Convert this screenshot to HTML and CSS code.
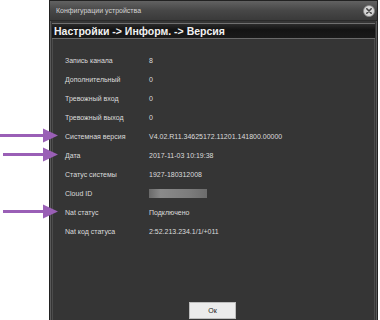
FILE: index.html
```html
<!DOCTYPE html>
<html lang="ru">
<head>
    <meta charset="UTF-8">
    <title>Конфигурации устройства</title>
    <link rel="stylesheet" href="styles.css">
</head>
<body>
    <div class="page">
        <div class="dialog">
            <div class="titlebar">
                <span class="title">Конфигурации устройства</span>
                <span class="close">
                    <svg width="12" height="12" viewBox="0 0 12 12">
                        <circle cx="6" cy="6" r="5.5" fill="#d6d6d6" stroke="#888" stroke-width="0.8"/>
                        <path d="M3.8 3.8 L8.2 8.2 M8.2 3.8 L3.8 8.2" stroke="#444" stroke-width="1.6" stroke-linecap="round"/>
                    </svg>
                </span>
            </div>
            <div class="crumbs">Настройки -&gt; Информ. -&gt; Версия</div>
            <div class="panel">
                <div class="info">
                    <span>Запись канала</span><span>8</span>
                    <span>Дополнительный</span><span>0</span>
                    <span>Тревожный вход</span><span>0</span>
                    <span>Тревожный выход</span><span>0</span>
                    <span>Системная версия</span><span>V4.02.R11.34625172.11201.141800.00000</span>
                    <span>Дата</span><span>2017-11-03 10:19:38</span>
                    <span>Статус системы</span><span>1927-180312008</span>
                    <span>Cloud ID</span><span><i class="blur"></i></span>
                    <span>Nat статус</span><span>Подключено</span>
                    <span>Nat код статуса</span><span>2:52.213.234.1/1/+011</span>
                </div>
                <div class="actions">
                    <button class="button">Ок</button>
                </div>
            </div>
        </div>
        <!-- arrows drawn over the dialog edge -->
        <svg class="arrows" width="70" height="320" viewBox="0 0 70 320">
            <g fill="#9a5fb6" stroke="#9a5fb6">
                <line x1="0" y1="135.5" x2="46" y2="135.5" stroke-width="3"/>
                <polygon points="43,128.5 58,135.5 43,142.5" stroke="none"/>
                <line x1="3" y1="154.5" x2="46" y2="154.5" stroke-width="3"/>
                <polygon points="43,147.5 58,154.5 43,161.5" stroke="none"/>
                <line x1="3" y1="211.5" x2="46" y2="211.5" stroke-width="3"/>
                <polygon points="43,204.5 58,211.5 43,218.5" stroke="none"/>
            </g>
        </svg>
    </div>
</body>
</html>
```

FILE: styles.css
```css
body {
    margin: 0;
    background: #ffffff;
    font-family: "Liberation Sans", Arial, sans-serif;
}

.page {
    position: relative;
    width: 380px;
    height: 320px;
    overflow: hidden;
}

.dialog {
    margin-left: 49px;
    width: 327px;
    height: 330px;
    background: #353535;
    border: 1px solid #222;
    box-shadow: inset 0 0 0 1px #5a5a5a;
    display: flex;
    flex-direction: column;
}

.titlebar {
    height: 19px;
    display: flex;
    align-items: center;
    justify-content: space-between;
    padding: 0 2px 0 6px;
    background: linear-gradient(#626262, #474747 50%, #3a3a3a);
    border-bottom: 1px solid #2a2a2a;
}

.title {
    font-size: 7px;
    color: #d4d4d4;
}

.close {
    display: flex;
}

.crumbs {
    margin: 2px 2px 0 2px;
    height: 14px;
    line-height: 14px;
    padding-left: 2px;
    font-size: 10.5px;
    font-weight: bold;
    color: #f2f2f2;
    background: linear-gradient(#2a2a2a, #141414 40%, #1a1a1a);
    border-top: 1px solid #707070;
    border-bottom: 1px solid #6a6a6a;
}

.panel {
    flex: 1;
    margin: 0 2px;
    border-left: 1px solid #4c4c4c;
    border-right: 1px solid #4c4c4c;
    padding: 12px 0 0 12px;
    display: flex;
    flex-direction: column;
}

.info {
    display: grid;
    grid-template-columns: 84px 1fr;
    grid-auto-rows: 19px;
    align-items: center;
    font-size: 7px;
    color: #dcdcdc;
}

.blur {
    display: block;
    width: 58px;
    height: 9px;
    background: linear-gradient(90deg, #6a6a6a, #8a8a8a 20%, #7c7c7c 70%, #6c6c6c);
}

.actions {
    margin-top: auto;
    padding-bottom: 12px;
    display: flex;
    justify-content: center;
    padding-right: 14px;
}

.button {
    width: 47px;
    height: 17px;
    padding: 0;
    font-family: "Liberation Sans", Arial, sans-serif;
    font-size: 7px;
    color: #222;
    background: #ebebeb;
    border: 1px solid #bdbdbd;
    border-radius: 0;
}

.arrows {
    position: absolute;
    left: 0;
    top: 0;
}
```
